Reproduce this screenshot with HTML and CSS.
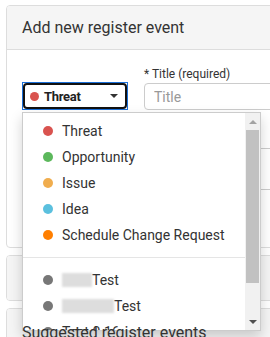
FILE: index.html
```html
<!DOCTYPE html>
<html lang="en">
<head>
<meta charset="utf-8">
<title>Add new register event</title>
<link rel="stylesheet" href="styles.css">
</head>
<body>
<div class="page">

  <div class="panel panel-main">
    <div class="panel-heading">Add new register event</div>
    <div class="panel-body">
      <div class="form-row">
        <div class="type-picker">
          <div class="type-select">
            <div class="type-face">
              <span class="dot dot-threat"></span>
              <span class="type-name">Threat</span>
              <span class="caret"></span>
            </div>
          </div>
          <div class="type-menu">
            <ul class="type-list">
              <li><span class="dot dot-threat"></span>Threat</li>
              <li><span class="dot dot-opportunity"></span>Opportunity</li>
              <li><span class="dot dot-issue"></span>Issue</li>
              <li><span class="dot dot-idea"></span>Idea</li>
              <li><span class="dot dot-change"></span>Schedule Change Request</li>
              <li class="divider"></li>
              <li><span class="dot dot-custom"></span><span class="redact redact-short"></span>Test</li>
              <li><span class="dot dot-custom"></span><span class="redact redact-long"></span>Test</li>
              <li><span class="dot dot-custom"></span>Test 0.16</li>
              <li><span class="dot dot-custom"></span>Test 0.17</li>
            </ul>
            <div class="scrollbar">
              <div class="scroll-btn"><span class="arrow-up"></span></div>
              <div class="scroll-track"><div class="scroll-thumb"></div></div>
              <div class="scroll-btn"><span class="arrow-down"></span></div>
            </div>
          </div>
        </div>
        <div class="field">
          <label class="field-label" for="title">* Title (required)</label>
          <input class="field-input" id="title" type="text" placeholder="Title">
        </div>
      </div>
      <div class="desc-row">
        <label class="field-label">Description</label>
        <div class="field-area"></div>
      </div>
    </div>
  </div>

  <div class="panel panel-collapsed">
    <div class="panel-heading">Details</div>
  </div>

  <div class="panel panel-collapsed">
    <div class="panel-heading"><span class="heading-text">Suggested register events</span></div>
  </div>

</div>
</body>
</html>
```

FILE: styles.css
```css
html, body {
  margin: 0;
  overflow: hidden;
}
body {
  background-color: #fff;
  font-family: Roboto, "Liberation Sans", Arial, sans-serif;
  font-size: 14px;
  color: #333;
}
.page {
  padding: 5px 0 0 6px;
}
.panel {
  width: 320px;
  border: 1px solid #ddd;
  border-radius: 4px;
  background-color: #fff;
  margin-bottom: 7px;
}
.panel-heading {
  background-color: #f5f5f5;
  padding: 11px 15px;
  font-size: 16px;
  line-height: 21px;
  border-radius: 3px 3px 0 0;
}
.panel-main .panel-heading {
  border-bottom: 1px solid #ddd;
}
.panel-collapsed .panel-heading {
  padding: 13px 15px 10px;
  border-radius: 3px;
}
.heading-text {
  position: relative;
  z-index: 20;
}
.panel-body {
  box-sizing: border-box;
  height: 197px;
  padding: 16px 15px;
}
.form-row {
  display: flex;
  align-items: flex-end;
  gap: 16px;
}
.type-picker {
  position: relative;
  width: 106px;
  flex: none;
}
.type-select {
  box-sizing: border-box;
  height: 28px;
  border: 1px solid #1b6fd8;
}
.type-face {
  box-sizing: border-box;
  height: 100%;
  border: 2px solid #111;
  border-radius: 4px;
  display: flex;
  align-items: center;
  padding: 0 7px 0 5px;
}
.type-face .dot {
  width: 9px;
  height: 9px;
  margin-right: 5px;
}
.type-name {
  font-weight: bold;
  font-size: 13px;
  letter-spacing: -0.3px;
  color: #222;
}
.caret {
  margin-left: auto;
  width: 0;
  height: 0;
  border-left: 4px solid transparent;
  border-right: 4px solid transparent;
  border-top: 4px solid #333;
}
.field {
  flex: 1;
  display: flex;
  flex-direction: column;
}
.field-label {
  font-size: 12px;
  line-height: 16px;
  margin-bottom: 1px;
}
.field-input {
  box-sizing: border-box;
  height: 27px;
  border: 1px solid #ccc;
  border-radius: 4px;
  padding: 0 9px;
  font-family: Roboto, "Liberation Sans", Arial, sans-serif;
  font-size: 14px;
  color: #333;
}
.field-input::placeholder {
  color: #999;
}
.desc-row {
  margin-top: 22px;
  display: flex;
  flex-direction: column;
}
.desc-row .field-label {
  margin-bottom: 0;
}
.field-area {
  height: 42px;
  box-sizing: border-box;
  border: 1px solid #ccc;
  border-radius: 4px;
}

/* dropdown menu */
.type-menu {
  position: absolute;
  top: 100%;
  left: 0;
  margin-top: 2px;
  box-sizing: border-box;
  width: 239px;
  height: 219px;
  display: flex;
  background-color: #fff;
  border: 1px solid #ccc;
  box-shadow: 0 6px 12px rgba(0, 0, 0, 0.175);
  z-index: 10;
}
.type-list {
  flex: 1;
  overflow: hidden;
  list-style: none;
  margin: 0;
  padding: 5px 0 0;
}
.type-list li {
  height: 26px;
  display: flex;
  align-items: center;
  padding-left: 20px;
  font-size: 14px;
  color: #333;
  white-space: nowrap;
}
.type-list li.divider {
  height: 1px;
  padding: 0;
  margin: 9px 0;
  background-color: #e5e5e5;
}
.dot {
  width: 10px;
  height: 10px;
  border-radius: 50%;
  margin-right: 9px;
  flex: none;
}
.dot-threat { background-color: #d9534f; }
.dot-opportunity { background-color: #5cb85c; }
.dot-issue { background-color: #f0ad4e; }
.dot-idea { background-color: #5bc0de; }
.dot-change { background-color: #ff7f00; }
.dot-custom { background-color: #777; }
.redact {
  height: 14px;
  background-color: #ddd;
  filter: blur(1px);
}
.redact-short { width: 30px; }
.redact-long { width: 52px; }

/* scrollbar */
.scrollbar {
  width: 15px;
  display: flex;
  flex-direction: column;
  background-color: #f1f1f1;
}
.scroll-btn {
  height: 17px;
  display: flex;
  align-items: center;
  justify-content: center;
}
.arrow-up {
  width: 0;
  height: 0;
  border-left: 4px solid transparent;
  border-right: 4px solid transparent;
  border-bottom: 4px solid #a3a3a3;
}
.arrow-down {
  width: 0;
  height: 0;
  border-left: 4px solid transparent;
  border-right: 4px solid transparent;
  border-top: 4px solid #505050;
}
.scroll-track {
  flex: 1;
  padding: 0 1px;
}
.scroll-thumb {
  height: 153px;
  background-color: #c1c1c1;
}
```
